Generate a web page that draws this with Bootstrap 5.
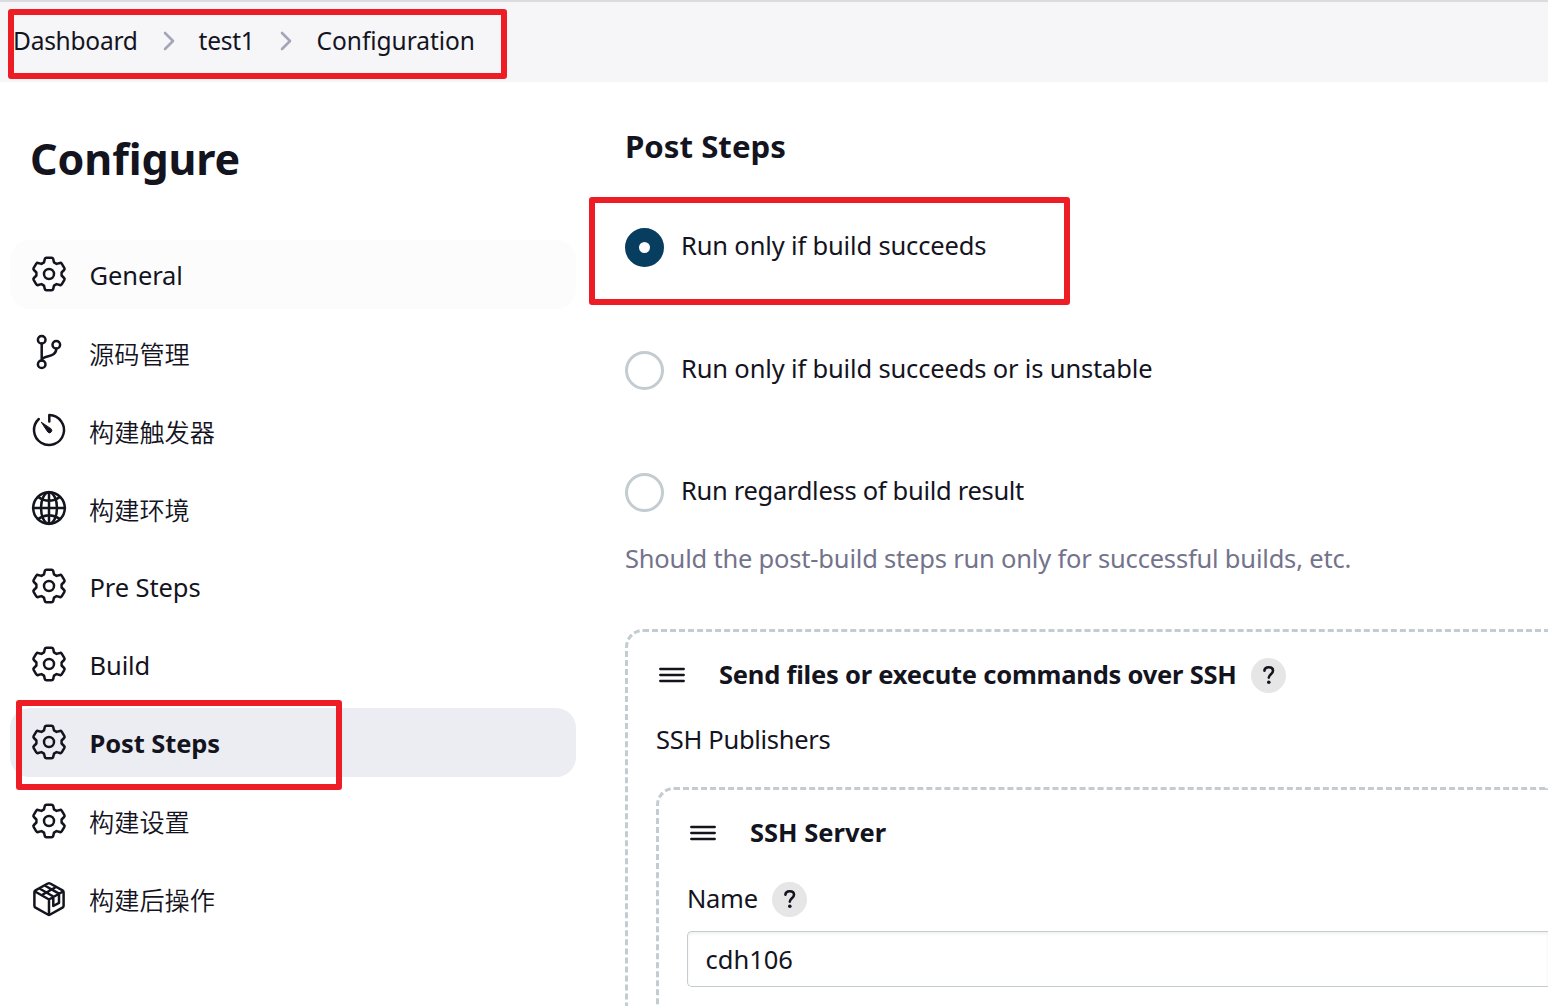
<!DOCTYPE html>
<html lang="zh-CN">
<head>
<meta charset="utf-8">
<title>Configuration</title>
<link rel="stylesheet" href="https://cdn.jsdelivr.net/npm/bootstrap@5.3.0/dist/css/bootstrap.min.css">
<style>
body{width:1548px;height:1006px;overflow:hidden;position:relative;background:#fff;color:#14141f;font-family:"Noto Sans","Noto Sans CJK SC",sans-serif;font-size:25.5px;line-height:36px}
.crumbbar{height:82px;background:#f6f6f8;border-top:2px solid #dcdce0;padding:0 0 3px 13px;font-size:24.5px}
.crumbbar svg{width:12px;height:20px;margin:1px 24px 0 25px;stroke:#a5a5b8;stroke-width:2.6;fill:none;stroke-linecap:round;stroke-linejoin:round}
.crumbbar a,.sidelink{color:#14141f;text-decoration:none;white-space:nowrap}
.crumbbar a{letter-spacing:-.25px}
.crumbbar a:last-child{letter-spacing:-.05px;margin-left:1px}
.sidebar{width:576px;padding:49px 0 0 10px}
.sidebar h1{font-size:43px;line-height:56px;font-weight:700;letter-spacing:-.1px;margin:0 0 53px 20px}
.sidelink{height:68.6px;margin-bottom:9.45px;border-radius:20px;padding-left:21px;gap:23px;letter-spacing:-.1px}
.sidelink span{padding-top:1px;margin-left:-.5px}
.sidelink svg{width:36px;height:36px;fill:none;stroke:#14141f;stroke-width:2.5;stroke-linecap:round;stroke-linejoin:round;overflow:visible}
.hovered{background:#fcfcfd}
.current{background:#ecedf3;font-weight:700}
.sidelink .zh{font-family:"Noto Sans CJK SC",sans-serif;font-weight:350;font-size:25.2px;margin-left:-1px;letter-spacing:0}
.content{width:972px;height:924px;overflow:hidden;padding:45px 0 0 49px}
.content span,.content h2{white-space:nowrap}
.content h2{font-size:31.2px;line-height:38px;font-weight:700;margin:0 0 63px}
.choice{height:39px;gap:17px;margin-bottom:83.6px;letter-spacing:-.16px}
.choice span{padding-bottom:5px}
.choice-last{letter-spacing:-.3px}
.dial{width:39px;height:39px;border-radius:50%;border:3px solid #c3ccd1}
.dial-on{border:14px solid #073d5f}
.hint{color:#73738c;letter-spacing:-.2px;margin:28px 0 53px}
.chunk{border:3px dashed #c3ccd1;border-right:0;border-bottom:0;border-top-left-radius:18px;padding:25px 0 18px 28px}
.chunkhead{height:36px;font-weight:700;padding-left:3px;margin-bottom:29px}
.chunkhead span{margin-left:34px;padding-bottom:2px;letter-spacing:-.22px}
.chunk .chunk .chunkhead span{letter-spacing:0}
.grip{width:26px;height:16px}
.grip svg{display:block;width:26px;height:16px;stroke:#14141f;stroke-width:2.3;stroke-linecap:round}
.help{width:35px;height:35px;border-radius:50%;background:#e6e6e6;margin-left:14px}
.help svg{width:35px;height:35px;display:block;fill:none;stroke:#14141f;stroke-width:2.6;stroke-linecap:round;stroke-linejoin:round}
.publabel{letter-spacing:-.3px;margin-bottom:29px;line-height:34px;padding-bottom:2px}
.namelabel{letter-spacing:-.3px}
.namelabel span{padding-bottom:2px}
.namebox{height:56px;border:1px solid #c3ccd1;border-right:0;border-radius:5px 0 0 5px;box-shadow:inset 0 2px 3px #0000000f;padding-left:17.5px;line-height:54px;margin-top:13px}
.callout{position:absolute;border:6px solid #ee1c25;border-radius:3px}
.callout-crumbs{left:7.5px;top:8.5px;width:499.5px;height:70.500px}
.callout-menu{left:16px;top:700px;width:326px;height:90px}
.callout-choice{left:589px;top:197px;width:481px;height:108px}
</style>
</head>
<body>
<svg class="d-none"><symbol id="gear" viewBox="-18 -18 36 36"><path d="M-5-11.6-4.2-15Q-3.8-16.2-2.6-16.2H2.6Q3.8-16.2 4.2-15L5-11.6 7.55-10.1 10.9-11Q12-11.4 12.7-10.4L15.4-5.8Q16-4.8 15.1-4L12.6-1.5V1.5L15.1 4Q16 4.8 15.4 5.8L12.7 10.4Q12 11.4 10.9 11L7.55 10.1 5 11.6 4.2 15Q3.8 16.2 2.6 16.2H-2.6Q-3.8 16.2-4.2 15L-5 11.6-7.55 10.1-10.9 11Q-12 11.4-12.7 10.4L-15.4 5.8Q-16 4.8-15.1 4L-12.6 1.5V-1.5L-15.1-4Q-16-4.8-15.4-5.8L-12.7-10.4Q-12-11.4-10.9-11L-7.55-10.1Z"/><circle r="5"/></symbol>
<symbol id="ask" viewBox="0 0 35 35"><path d="M13.400 12.600C13.800 8 22 8.200 22 12.700 22 16 17.800 16.300 17.800 19.600"/><circle cx="17.800" cy="24.300" r="1.800" fill="#14141f" stroke="none"/></symbol>
<symbol id="bars" viewBox="0 0 26 16"><path d="M1.200 2H24.800M1.200 8H24.800M1.200 14H24.800"/></symbol></svg>
<nav class="crumbbar d-flex align-items-center">
<a href="#">Dashboard</a>
<svg viewBox="0 0 12 20"><path d="M2 2l8 8-8 8"/></svg>
<a href="#">test1</a>
<svg viewBox="0 0 12 20"><path d="M2 2l8 8-8 8"/></svg>
<a href="#">Configuration</a>
</nav>
<div class="d-flex">
<aside class="sidebar flex-shrink-0">
<h1>Configure</h1>
<a class="sidelink hovered d-flex align-items-center" href="#"><svg><use href="#gear"/></svg><span>General</span></a>
<a class="sidelink d-flex align-items-center" href="#"><svg viewBox="-18 -18 36 36"><circle cx="-7.300" cy="-12.300" r="3.800"/><circle cx="-7.300" cy="12.300" r="3.800"/><circle cx="7.300" cy="-7.300" r="3.800"/><path d="M-7.300-8.500V8.500M-7.300 7.500C-5.500 3 7.300 6 7.300-3.500"/></svg><span class="zh">源码管理</span></a>
<a class="sidelink d-flex align-items-center" href="#"><svg viewBox="-18 -18 36 36"><path d="M.300-8.500V-15A15 15 0 1 1-10.200-11"/><path d="M-7.500-7.500-1.200 2A2 2 0 0 0 2.200-1Z" fill="#14141f" stroke-width="1"/></svg><span class="zh">构建触发器</span></a>
<a class="sidelink d-flex align-items-center" href="#"><svg viewBox="-18 -18 36 36"><circle r="15.800"/><ellipse rx="8" ry="15.800"/><path d="M0-16V16M-16 0H16M-11-11Q0-3.500 11-11M-11 11Q0 3.500 11 11"/></svg><span class="zh">构建环境</span></a>
<a class="sidelink d-flex align-items-center" href="#"><svg><use href="#gear"/></svg><span>Pre Steps</span></a>
<a class="sidelink d-flex align-items-center" href="#"><svg><use href="#gear"/></svg><span>Build</span></a>
<a class="sidelink current d-flex align-items-center" href="#"><svg><use href="#gear"/></svg><span>Post Steps</span></a>
<a class="sidelink d-flex align-items-center" href="#"><svg><use href="#gear"/></svg><span class="zh">构建设置</span></a>
<a class="sidelink d-flex align-items-center mb-0" href="#"><svg viewBox="-18 -18 36 36"><path d="M-1.200-15.500Q0-16.200 1.200-15.500L13.500-8.700Q14.600-8 14.600-6.800V6.800Q14.600 8 13.500 8.700L1.200 15.500Q0 16.200-1.200 15.500L-13.500 8.700Q-14.600 8-14.600 6.800V-6.800Q-14.600-8-13.500-8.700ZM-14-7.500 0 .500 14-7.500M0 .500V16M-9.500-10.500 4.300-2.500V7L10 3.800V-5.300L-4.300-13.500M-7-4 7-12"/></svg><span class="zh">构建后操作</span></a>
</aside>
<main class="content">
<h2>Post Steps</h2>
<div class="choice d-flex align-items-center"><i class="dial dial-on"></i><span>Run only if build succeeds</span></div>
<div class="choice d-flex align-items-center"><i class="dial"></i><span>Run only if build succeeds or is unstable</span></div>
<div class="choice choice-last d-flex align-items-center mb-0"><i class="dial"></i><span>Run regardless of build result</span></div>
<div class="hint">Should the post-build steps run only for successful builds, etc.</div>
<section class="chunk">
<div class="chunkhead d-flex align-items-center"><i class="grip"><svg><use href="#bars"/></svg></i><span>Send files or execute commands over SSH</span><i class="help"><svg><use href="#ask"/></svg></i></div>
<div class="publabel">SSH Publishers</div>
<section class="chunk">
<div class="chunkhead d-flex align-items-center"><i class="grip"><svg><use href="#bars"/></svg></i><span>SSH Server</span></div>
<div class="namelabel d-flex align-items-center"><span>Name</span><i class="help"><svg><use href="#ask"/></svg></i></div>
<div class="namebox">cdh106</div>
</section>
</section>
</main>
</div>
<div class="callout callout-crumbs"></div>
<div class="callout callout-menu"></div>
<div class="callout callout-choice"></div>
<script src="https://cdn.jsdelivr.net/npm/bootstrap@5.3.0/dist/js/bootstrap.bundle.min.js"></script>
</body>
</html>
